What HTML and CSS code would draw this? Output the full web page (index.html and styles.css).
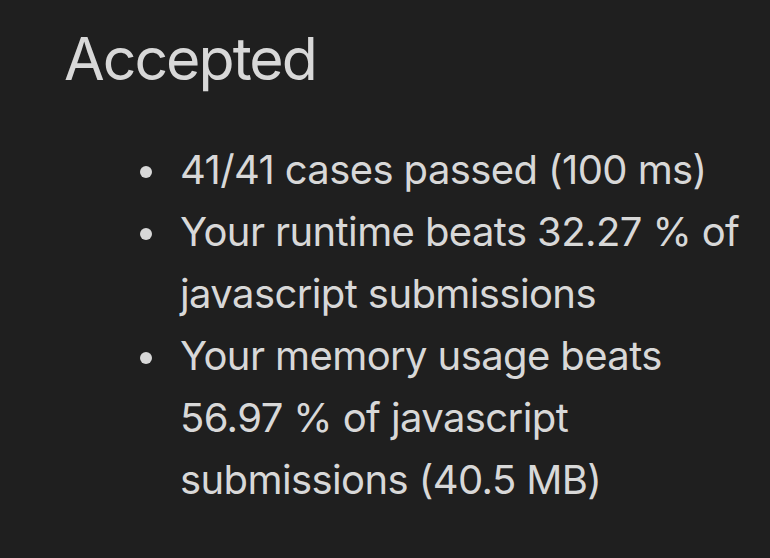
FILE: index.html
```html
<!DOCTYPE html>
<html>
<head>
<meta charset="utf-8">
<link rel="stylesheet" href="styles.css">
</head>
<body>
<main class="result">
  <h1 class="title">Accepted</h1>
  <ul class="stats">
    <li>41/41 cases passed (100 ms)</li>
    <li>Your runtime beats 32.27 % of javascript submissions</li>
    <li>Your memory usage beats 56.97 % of javascript submissions (40.5 MB)</li>
  </ul>
</main>
</body>
</html>
```

FILE: styles.css
```css
html, body {
  margin: 0;
  padding: 0;
  background: #1f1f1f;
  height: 100%;
}
body {
  color: #d8d8d8;
  font-family: Inter, "Noto Sans", sans-serif;
}
.result {
  padding: 24px 0 0 64px;
}
.title {
  margin: 0;
  font-size: 59px;
  font-weight: 400;
  line-height: 70px;
  letter-spacing: -2px;
}
.stats {
  list-style: none;
  margin: 45px 0 0 0;
  padding: 0 0 0 76px;
  width: 620px;
  font-size: 40px;
  line-height: 62px;
  letter-spacing: -0.6px;
}
.stats li {
  display: grid;
  grid-template-columns: 12px 1fr;
  column-gap: 28px;
  align-items: start;
}
.stats li::before {
  content: "";
  width: 12px;
  height: 12px;
  border-radius: 50%;
  background: #d8d8d8;
  margin-top: 27px;
}
```
